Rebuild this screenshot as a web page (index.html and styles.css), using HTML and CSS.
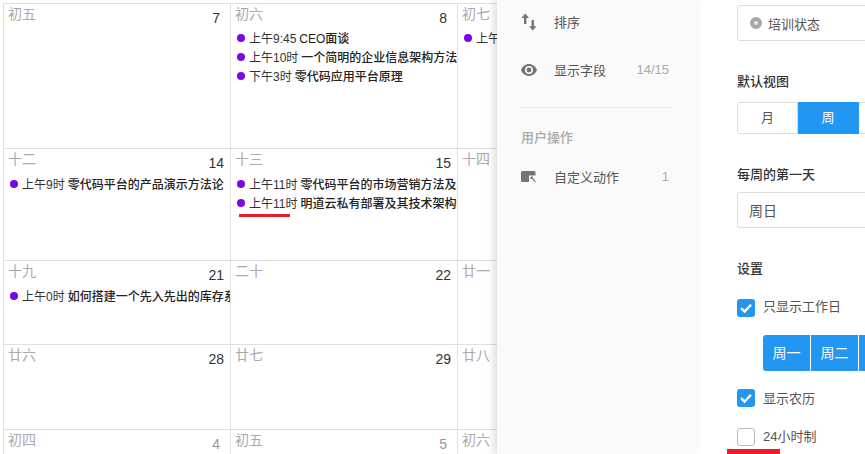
FILE: index.html
```html
<!DOCTYPE html>
<html lang="zh-CN">
<head>
<meta charset="utf-8">
<title>日历视图设置</title>
<link rel="stylesheet" href="styles.css">
</head>
<body>
<div class="app">
  <main class="calendar">
    <div class="grid">
      <div class="cell"><div class="cell-head"><span class="lunar">初五</span><span class="day day-single">7</span></div></div>
      <div class="cell"><div class="cell-head"><span class="lunar">初六</span><span class="day day-single">8</span></div>
        <div class="event"><i class="dot"></i><span class="time">上午9:45</span> <b class="title">CEO面谈</b></div>
        <div class="event"><i class="dot"></i><span class="time">上午10时</span> <b class="title">一个简明的企业信息架构方法论</b></div>
        <div class="event"><i class="dot"></i><span class="time">下午3时</span> <b class="title">零代码应用平台原理</b></div>
      </div>
      <div class="cell"><div class="cell-head"><span class="lunar">初七</span><span class="day day-single">9</span></div>
        <div class="event"><i class="dot"></i><span class="time">上午10时</span> <b class="title">培训</b></div>
      </div>

      <div class="cell"><div class="cell-head"><span class="lunar">十二</span><span class="day">14</span></div>
        <div class="event"><i class="dot"></i><span class="time">上午9时</span> <b class="title">零代码平台的产品演示方法论</b></div>
      </div>
      <div class="cell"><div class="cell-head"><span class="lunar">十三</span><span class="day">15</span></div>
        <div class="event"><i class="dot"></i><span class="time">上午11时</span> <b class="title">零代码平台的市场营销方法及案例</b></div>
        <div class="event"><i class="dot"></i><span class="time">上午11时</span> <b class="title">明道云私有部署及其技术架构介绍</b></div>
        <span class="mark mark-time"></span>
      </div>
      <div class="cell"><div class="cell-head"><span class="lunar">十四</span><span class="day">16</span></div></div>

      <div class="cell"><div class="cell-head"><span class="lunar">十九</span><span class="day">21</span></div>
        <div class="event"><i class="dot"></i><span class="time">上午0时</span> <b class="title">如何搭建一个先入先出的库存系统</b></div>
      </div>
      <div class="cell"><div class="cell-head"><span class="lunar">二十</span><span class="day">22</span></div></div>
      <div class="cell"><div class="cell-head"><span class="lunar">廿一</span><span class="day">23</span></div></div>

      <div class="cell"><div class="cell-head"><span class="lunar">廿六</span><span class="day">28</span></div></div>
      <div class="cell"><div class="cell-head"><span class="lunar">廿七</span><span class="day">29</span></div></div>
      <div class="cell"><div class="cell-head"><span class="lunar">廿八</span><span class="day">30</span></div></div>

      <div class="cell"><div class="cell-head"><span class="lunar">初四</span><span class="day day-single day-next">4</span></div></div>
      <div class="cell"><div class="cell-head"><span class="lunar">初五</span><span class="day day-single day-next">5</span></div></div>
      <div class="cell"><div class="cell-head"><span class="lunar">初六</span><span class="day day-single day-next">6</span></div></div>
    </div>
  </main>

  <aside class="menu">
    <div class="menu-row">
      <svg class="menu-icon" viewBox="0 0 16 18" width="16" height="18"><path fill="#757575" d="M4.2 0.6 L8 5 H5.4 V11 H3 V5 H0.4 Z M10.6 7 H13 V13.2 H15.6 L11.8 17.6 L8 13.2 H10.6 Z"/></svg>
      <span class="menu-label">排序</span>
    </div>
    <div class="menu-row">
      <svg class="menu-icon" viewBox="0 0 16 12" width="16" height="12"><path fill="#757575" fill-rule="evenodd" d="M8 0 C4.4 0 1.3 2.4 0 6 C1.3 9.6 4.4 12 8 12 C11.6 12 14.7 9.6 16 6 C14.7 2.4 11.6 0 8 0 Z M8 10 A4 4 0 1 1 8 2 A4 4 0 0 1 8 10 Z M8 3.6 A2.4 2.4 0 1 0 8 8.4 A2.4 2.4 0 0 0 8 3.6 Z"/></svg>
      <span class="menu-label">显示字段</span>
      <span class="menu-count">14/15</span>
    </div>
    <hr class="menu-divider">
    <div class="menu-title">用户操作</div>
    <div class="menu-row">
      <svg class="menu-icon" viewBox="0 0 16 12" width="16" height="12"><path fill="#757575" d="M1.5 0 H13 A1.5 1.5 0 0 1 14.5 1.5 V4.5 H8 V11 H1.5 A1.5 1.5 0 0 1 0 9.5 V1.5 A1.5 1.5 0 0 1 1.5 0 Z"/><path fill="none" stroke="#757575" stroke-width="1.2" d="M10 6 L10 8 M10 6 L12 6 M10.3 6.3 L14.5 10.8"/></svg>
      <span class="menu-label">自定义动作</span>
      <span class="menu-count">1</span>
    </div>
  </aside>

  <section class="settings">
    <div class="field field-first">
      <i class="status-dot"></i><span>培训状态</span>
    </div>
    <div class="label label-view">默认视图</div>
    <div class="segments">
      <span class="seg seg-first">月</span><span class="seg seg-on">周</span><span class="seg seg-last">天</span>
    </div>
    <div class="label label-week">每周的第一天</div>
    <div class="field field-select"><span>周日</span></div>
    <div class="label label-set">设置</div>
    <label class="check-row check-work"><span class="box box-on"><svg viewBox="0 0 18 18" width="18" height="18"><path fill="none" stroke="#fff" stroke-width="2.4" d="M4 9.2 L7.6 12.6 L14 5.8"/></svg></span><span class="check-text">只显示工作日</span></label>
    <div class="weekdays">
      <span class="wd">周一</span><span class="wd">周二</span><span class="wd">周三</span>
    </div>
    <label class="check-row check-lunar"><span class="box box-on"><svg viewBox="0 0 18 18" width="18" height="18"><path fill="none" stroke="#fff" stroke-width="2.4" d="M4 9.2 L7.6 12.6 L14 5.8"/></svg></span><span class="check-text">显示农历</span></label>
    <label class="check-row check-24"><span class="box"></span><span class="check-text">24小时制</span></label>
    <span class="mark mark-24"></span>
  </section>
</div>
</body>
</html>
```

FILE: styles.css
```css
html, body {
  margin: 0;
  padding: 0;
  height: 100%;
  overflow: hidden;
  background: #fff;
}
body {
  font-family: "Liberation Sans", "Noto Sans CJK SC", sans-serif;
  color: #333;
}
.app {
  display: flex;
  width: 865px;
  height: 454px;
  overflow: hidden;
}
.calendar {
  flex: 0 0 497px;
  overflow: hidden;
  padding: 3px 0 0 3px;
  box-sizing: border-box;
}
.grid {
  display: grid;
  grid-template-columns: 227px 227px 227px;
  grid-template-rows: 145px 112px 84px 85px 40px;
  border-left: 1px solid #e0e0e0;
  width: 681px;
}
.cell {
  position: relative;
  border-top: 1px solid #e0e0e0;
  border-right: 1px solid #e0e0e0;
  box-sizing: border-box;
  padding: 0 0 0 4px;
  min-width: 0;
  overflow: hidden;
}
.cell-head {
  display: flex;
  justify-content: space-between;
  height: 25px;
  padding-right: 6px;
}
.cell:nth-child(-n+3) .cell-head { height: 24px; }
.lunar {
  font-size: 14px;
  line-height: 21px;
  color: #aaa;
}
.day {
  font-size: 14px;
  line-height: 20px;
  margin-top: 4px;
  color: #333;
}
.day-single { padding-right: 4px; }
.day-next { color: #999; }
.event {
  display: flex;
  align-items: center;
  height: 19px;
  font-size: 12px;
  white-space: pre;
  overflow: hidden;
  padding-left: 2px;
  color: #333;
}
.dot {
  flex: none;
  width: 8px;
  height: 8px;
  border-radius: 50%;
  background: #7b06e8;
  margin-right: 4px;
}
.time { font-weight: 400; }
.title { font-weight: 500; color: #222; margin-left: 3px; }
.mark {
  position: absolute;
  background: #ee1c2b;
}
.mark-time {
  left: 8px;
  top: 65px;
  width: 51px;
  height: 3px;
}

.menu {
  position: relative;
  flex: 0 0 200px;
  box-sizing: border-box;
  padding: 0 24px;
  background: #fafafa;
  box-shadow: -3px 0 8px rgba(0, 0, 0, .14);
  overflow: hidden;
}
.menu-row {
  display: flex;
  align-items: center;
  height: 48px;
  font-size: 13px;
  color: #555;
}
.menu-row:first-child { margin-top: -2px; }
.menu-icon {
  flex: none;
  width: 16px;
  margin-right: 17px;
}
.menu-label { flex: 1; padding-bottom: 2px; }
.menu-count {
  color: #aaa;
  font-size: 13px;
  margin-right: 4px;
  padding-bottom: 2px;
}
.menu-divider {
  border: 0;
  border-top: 1px solid #eee;
  margin: 13px 0 0;
}
.menu-title {
  margin-top: 21px;
  margin-bottom: 6px;
  font-size: 13px;
  line-height: 18px;
  font-weight: 500;
  color: #aaa;
}

.settings {
  position: relative;
  flex: 1;
  min-width: 0;
  padding-left: 40px;
  overflow: hidden;
}
.field {
  display: flex;
  align-items: center;
  box-sizing: border-box;
  width: 180px;
  height: 36px;
  border: 1px solid #ddd;
  border-radius: 3px;
  font-size: 13px;
  color: #555;
  background: #fff;
}
.field-first { margin-top: 5px; padding-left: 12px; }
.field-select { padding-left: 11px; font-size: 14px; }
.status-dot {
  box-sizing: border-box;
  width: 12px;
  height: 12px;
  border-radius: 50%;
  border: 4px solid #a8a8a8;
  background: #e8e8e8;
  margin-right: 6px;
}
.label {
  font-size: 13px;
  line-height: 18px;
  font-weight: 500;
  color: #333;
}
.label-view { margin-top: 32px; margin-bottom: 11px; }
.label-week { margin-top: 32px; margin-bottom: 8px; }
.label-set { margin-top: 32px; margin-bottom: 21px; }
.segments {
  display: flex;
  width: 180px;
  height: 32px;
}
.seg {
  flex: none;
  width: 61px;
  box-sizing: border-box;
  border: 1px solid #ddd;
  border-left: 0;
  text-align: center;
  font-size: 13px;
  line-height: 30px;
  color: #555;
}
.seg-first { border-left: 1px solid #ddd; border-radius: 3px 0 0 3px; }
.seg-on {
  background: #2196f3;
  border-color: #2196f3;
  color: #fff;
}
.check-row {
  display: flex;
  align-items: center;
  height: 18px;
  font-size: 13px;
  color: #555;
}
.check-text { padding-bottom: 2px; }
.check-work .check-text { padding-bottom: 6px; }
.check-24 .check-text { padding-bottom: 4px; }
.box {
  flex: none;
  box-sizing: border-box;
  width: 18px;
  height: 18px;
  border: 1px solid #bbb;
  border-radius: 3px;
  margin-right: 8px;
}
.box svg { display: block; }
.box-on { background: #2196f3; border: 0; }
.weekdays {
  display: flex;
  margin: 18px 0 18px 26px;
  width: 160px;
  height: 36px;
  border-radius: 3px 0 0 3px;
  overflow: hidden;
}
.wd {
  flex: none;
  width: 47px;
  margin-right: 1px;
  background: #2196f3;
  color: #fff;
  font-size: 14px;
  line-height: 36px;
  text-align: center;
}
.check-24 { margin-top: 21px; }
.mark-24 {
  left: 30px;
  top: 449px;
  width: 53px;
  height: 5px;
}
```
